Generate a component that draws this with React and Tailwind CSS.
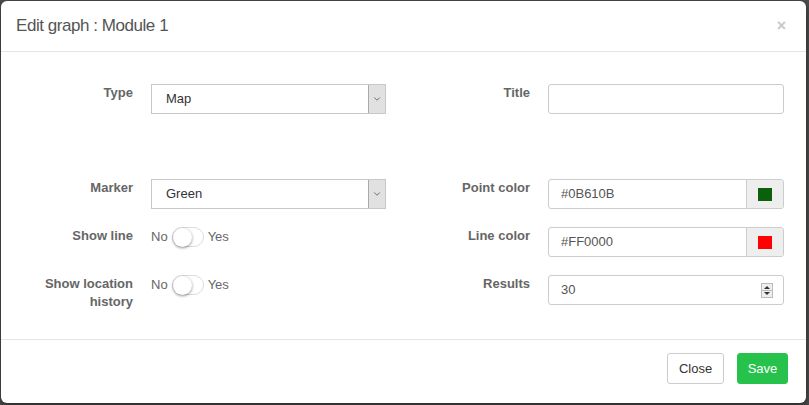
import { ChevronDown } from 'lucide-react';

const font = { fontFamily: '"Liberation Sans", Arial, sans-serif' };

const Select = ({ value }) => (
  <div className="flex h-[30px] w-[235px] border border-[#c8c8c8] bg-white">
    <div className="flex-1 pl-[14px] text-[13px] leading-[28px] text-[#333]">{value}</div>
    <div className="flex w-[17px] items-center justify-center border-l border-[#aaa] bg-[#e1e1e1]">
      <ChevronDown size={10} strokeWidth={2} className="text-[#555]" />
    </div>
  </div>
);

const TextInput = ({ value, children }) => (
  <div className="flex h-[30px] w-[236px] rounded-[3px] border border-[#ccc] bg-white">
    <div className="flex-1 pl-[12px] text-[13px] leading-[28px] text-[#555]">{value}</div>
    {children}
  </div>
);

const ColorAddon = ({ color }) => (
  <div className="flex w-[37px] items-center justify-center rounded-r-[3px] border-l border-[#ccc] bg-[#eee]">
    <div className={`h-[13px] w-[14px] ${color}`} />
  </div>
);

const Toggle = () => (
  <div className="flex h-[20px] items-center self-start text-[13px] leading-[18px] text-[#666]">
    <span>No</span>
    <div className="mx-[4px] flex h-[20px] w-[32px] items-center rounded-full border border-[#ddd] bg-white">
      <div className="h-[19px] w-[19px] rounded-full bg-white shadow-[0_1px_3px_rgba(0,0,0,0.45)]" />
    </div>
    <span>Yes</span>
  </div>
);

const Label = ({ children, w }) => (
  <div className={`${w} text-right text-[13px] font-bold leading-[18px] text-[#666]`}>{children}</div>
);

export default function App() {
  return (
    <div className="h-[405px] w-[809px] overflow-hidden bg-[#4d4d4d] pl-[1px] pt-[1px]" style={font}>
      <div className="flex h-[402px] w-[805px] flex-col rounded-[6px] bg-white shadow-[0_3px_9px_rgba(0,0,0,0.5)]">
        {/* header */}
        <div className="flex h-[51px] items-center justify-between border-b border-[#e5e5e5] px-[15px]">
          <div className="text-[17px] tracking-[-0.45px] text-[#555]">Edit graph : Module 1</div>
          <div className="pr-[5px] text-[16px] font-bold text-[#c8c8c8]">×</div>
        </div>

        {/* body */}
        <div className="flex h-[288px] flex-col border-b border-[#e5e5e5] pt-[32px]">
          <div className="flex h-[95px]">
            <div className="flex w-[400px] items-start gap-[18px] pl-[13px]">
              <Label w="w-[119px]">Type</Label>
              <Select value="Map" />
            </div>
            <div className="flex items-start gap-[18px]">
              <Label w="w-[129px]">Title</Label>
              <TextInput value="" />
            </div>
          </div>

          <div className="flex h-[48px]">
            <div className="flex w-[400px] items-start gap-[18px] pl-[13px]">
              <Label w="w-[119px]">Marker</Label>
              <Select value="Green" />
            </div>
            <div className="flex items-start gap-[18px]">
              <Label w="w-[129px]">Point color</Label>
              <TextInput value="#0B610B">
                <ColorAddon color="bg-[#0B610B]" />
              </TextInput>
            </div>
          </div>

          <div className="flex h-[48px]">
            <div className="flex w-[400px] items-start gap-[18px] pl-[13px]">
              <Label w="w-[119px]">Show line</Label>
              <Toggle />
            </div>
            <div className="flex items-start gap-[18px]">
              <Label w="w-[129px]">Line color</Label>
              <TextInput value="#FF0000">
                <ColorAddon color="bg-[#FF0000]" />
              </TextInput>
            </div>
          </div>

          <div className="flex">
            <div className="flex w-[400px] items-start gap-[18px] pl-[13px]">
              <Label w="w-[119px]">
                Show location
                <br />
                history
              </Label>
              <Toggle />
            </div>
            <div className="flex items-start gap-[18px]">
              <Label w="w-[129px]">Results</Label>
              <TextInput value="30">
                <div className="flex items-center pr-[10px]">
                  <div className="flex h-[15px] w-[12px] flex-col items-center justify-center gap-[1px] border border-[#bbb] bg-[#eee]">
                    <div className="h-0 w-0 border-x-[3px] border-b-[3px] border-x-transparent border-b-[#333]" />
                    <div className="h-[1px] w-[10px] bg-[#bbb]" />
                    <div className="h-0 w-0 border-x-[3px] border-t-[3px] border-x-transparent border-t-[#333]" />
                  </div>
                </div>
              </TextInput>
            </div>
          </div>
        </div>

        {/* footer */}
        <div className="flex justify-end gap-[13px] pl-[16px] pr-[18px] pt-[13px]">
          <button className="h-[31px] w-[57px] rounded-[3px] border border-[#ccc] bg-white text-[13px] text-[#333]">
            Close
          </button>
          <button className="h-[31px] w-[51px] rounded-[3px] border border-[#27c24c] bg-[#27c24c] text-[13px] text-white">
            Save
          </button>
        </div>
      </div>
    </div>
  );
}
